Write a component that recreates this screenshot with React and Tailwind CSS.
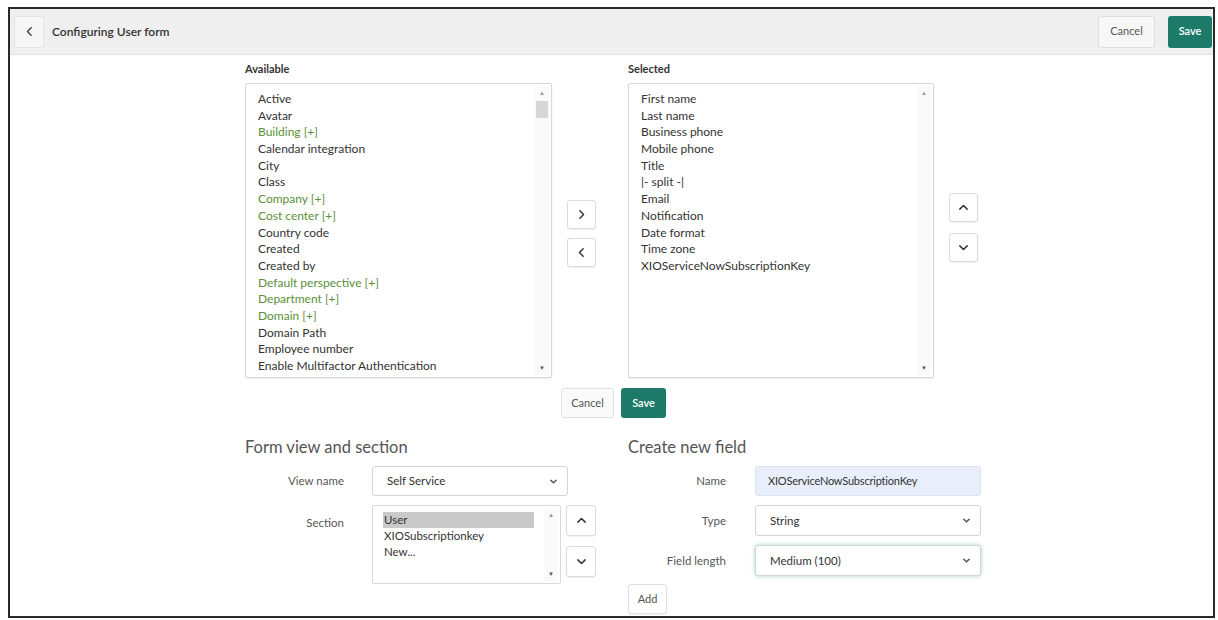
import React from "react";

const Chevron = ({ dir = "right", className = "" }) => {
  const d = {
    right: "M6 3.5 L10.5 8 L6 12.5",
    left: "M10 3.5 L5.5 8 L10 12.5",
    up: "M3.5 10 L8 5.5 L12.5 10",
    down: "M3.5 6 L8 10.5 L12.5 6",
  }[dir];
  return (
    <svg viewBox="0 0 16 16" className={className} fill="none" stroke="currentColor" strokeWidth="1.8" strokeLinecap="round" strokeLinejoin="round">
      <path d={d} />
    </svg>
  );
};

const SmallCaret = () => (
  <svg viewBox="0 0 10 10" className="w-[9px] h-[9px] text-[#555]" fill="none" stroke="currentColor" strokeWidth="1.6" strokeLinecap="round" strokeLinejoin="round">
    <path d="M2 3.5 L5 6.5 L8 3.5" />
  </svg>
);

const IconBtn = ({ dir, className = "" }) => (
  <div className={"w-[29px] h-[29px] flex items-center justify-center bg-white border border-[#dcdcdc] rounded-[3px] shadow-[0_1px_1px_rgba(0,0,0,0.06)] text-[#333] " + className}>
    <Chevron dir={dir} className="w-[13px] h-[13px]" />
  </div>
);

const Scrollbar = ({ thumb }) => (
  <div className="absolute right-[2px] top-[2px] bottom-[2px] w-[14px] bg-[#fafafa] flex flex-col items-center">
    <div className="h-[14px] flex items-center justify-center text-[6px] text-[#999] leading-none">▲</div>
    {thumb && <div className="w-[12px] h-[17px] bg-[#d6d6d6] mt-[1px]" />}
    <div className="flex-1" />
    <div className="h-[14px] flex items-center justify-center text-[6px] text-[#555] leading-none">▼</div>
  </div>
);

const available = [
  ["Active", false],
  ["Avatar", false],
  ["Building [+]", true],
  ["Calendar integration", false],
  ["City", false],
  ["Class", false],
  ["Company [+]", true],
  ["Cost center [+]", true],
  ["Country code", false],
  ["Created", false],
  ["Created by", false],
  ["Default perspective [+]", true],
  ["Department [+]", true],
  ["Domain [+]", true],
  ["Domain Path", false],
  ["Employee number", false],
  ["Enable Multifactor Authentication", false],
];

const selected = [
  "First name",
  "Last name",
  "Business phone",
  "Mobile phone",
  "Title",
  "|- split -|",
  "Email",
  "Notification",
  "Date format",
  "Time zone",
  "XIOServiceNowSubscriptionKey",
];

const Select = ({ value, className = "" }) => (
  <div className={"h-[30px] flex items-center justify-between pl-[14px] pr-[9px] bg-white border border-[#d4d4d4] rounded-[3px] text-[11.5px] text-[#333] " + className}>
    <span>{value}</span>
    <SmallCaret />
  </div>
);

export default function App() {
  return (
    <div className="w-[1218px] h-[620px] bg-white pt-[7px] pl-[8px]" style={{ fontFamily: "Lato, 'Open Sans', sans-serif" }}>
      <div className="w-[1207px] h-[611px] border-2 border-[#2a2a2a] flex flex-col overflow-hidden">
        {/* Header */}
        <div className="h-[46px] shrink-0 bg-[#efefef] border-b border-[#e2e2e2] flex items-center pl-[4px] pr-[1px]">
          <div className="w-[30px] h-[32px] flex items-center justify-center bg-[#f6f6f6] border border-[#e4e4e4] rounded-[2px] text-[#444]">
            <Chevron dir="left" className="w-[13px] h-[13px]" />
          </div>
          <div className="ml-[8px] text-[12px] font-semibold text-[#333]">Configuring User form</div>
          <div className="flex-1" />
          <div className="w-[57px] h-[32px] flex items-center justify-center bg-[#f7f7f7] border border-[#dedede] rounded-[3px] text-[11px] text-[#555]">Cancel</div>
          <div className="ml-[13px] w-[44px] h-[32px] flex items-center justify-center bg-[#1d7a69] rounded-[3px] text-[11px] font-semibold text-white">Save</div>
        </div>

        {/* Body */}
        <div className="pl-[235px] flex flex-col">
          <div className="flex">
            {/* Available */}
            <div className="w-[307px] flex flex-col">
              <div className="h-[28px] flex items-center text-[11px] font-bold text-[#333]">Available</div>
              <div className="relative h-[295px] bg-white border border-[#d8d8d8] rounded-[2px] shadow-[0_1px_2px_rgba(0,0,0,0.08)] pl-[12px] pt-[7px]">
                {available.map(([t, g]) => (
                  <div key={t} className={"h-[16.7px] leading-[16.7px] text-[12px] " + (g ? "text-[#5a8f3a]" : "text-[#333]")}>{t}</div>
                ))}
                <Scrollbar thumb />
              </div>
            </div>
            {/* Move buttons */}
            <div className="ml-[15px] pt-[145px] flex flex-col gap-[9px]">
              <IconBtn dir="right" />
              <IconBtn dir="left" />
            </div>
            {/* Selected */}
            <div className="ml-[32px] w-[306px] flex flex-col">
              <div className="h-[28px] flex items-center text-[11px] font-bold text-[#333]">Selected</div>
              <div className="relative h-[295px] bg-white border border-[#d8d8d8] rounded-[2px] shadow-[0_1px_2px_rgba(0,0,0,0.08)] pl-[12px] pt-[7px]">
                {selected.map((t) => (
                  <div key={t} className="h-[16.7px] leading-[16.7px] text-[12px] text-[#333]">{t}</div>
                ))}
                <Scrollbar />
              </div>
            </div>
            {/* Order buttons */}
            <div className="ml-[15px] pt-[138px] flex flex-col gap-[11px]">
              <IconBtn dir="up" />
              <IconBtn dir="down" />
            </div>
          </div>

          {/* Cancel / Save */}
          <div className="mt-[10px] pl-[316px] flex gap-[7px]">
            <div className="w-[53px] h-[30px] flex items-center justify-center bg-[#fafafa] border border-[#e0e0e0] rounded-[3px] text-[11px] text-[#555]">Cancel</div>
            <div className="w-[45px] h-[30px] flex items-center justify-center bg-[#1d7a69] rounded-[3px] text-[11px] font-semibold text-white">Save</div>
          </div>

          {/* Bottom sections */}
          <div className="mt-[14px] flex">
            {/* Form view and section */}
            <div className="w-[383px] flex flex-col">
              <div className="h-[30px] flex items-center text-[16.5px] text-[#555]">Form view and section</div>
              <div className="mt-[4px] flex items-center">
                <div className="w-[99px] text-right text-[11.5px] text-[#555]">View name</div>
                <Select value="Self Service" className="ml-[28px] w-[196px]" />
              </div>
              <div className="mt-[9px] flex items-start">
                <div className="w-[99px] text-right text-[11.5px] text-[#555] pt-[9px]">Section</div>
                <div className="ml-[28px] relative w-[189px] h-[79px] bg-white border border-[#d8d8d8] rounded-[2px] pt-[6px] pl-[10px] pr-[26px]">
                  <div className="h-[16px] leading-[16px] bg-[#c9c9c9] pl-[1px] text-[11.5px] text-[#333]">User</div>
                  <div className="h-[16px] leading-[16px] pl-[1px] text-[11.5px] text-[#333]">XIOSubscriptionkey</div>
                  <div className="h-[16px] leading-[16px] pl-[1px] text-[11.5px] text-[#333]">New...</div>
                  <Scrollbar />
                </div>
                <div className="ml-[5px] flex flex-col gap-[10px]">
                  <IconBtn dir="up" className="w-[30px] h-[31px]" />
                  <IconBtn dir="down" className="w-[30px] h-[31px]" />
                </div>
              </div>
            </div>

            {/* Create new field */}
            <div className="flex flex-col">
              <div className="h-[30px] flex items-center text-[16.5px] text-[#555]">Create new field</div>
              <div className="mt-[4px] flex items-center">
                <div className="w-[98px] text-right text-[11.5px] text-[#555]">Name</div>
                <div className="ml-[29px] w-[226px] h-[30px] flex items-center pl-[12px] bg-[#e8effb] border border-[#dde3ee] rounded-[3px] text-[11px] text-[#333] tracking-[-0.2px]">XIOServiceNowSubscriptionKey</div>
              </div>
              <div className="mt-[9px] flex items-center">
                <div className="w-[98px] text-right text-[11.5px] text-[#555]">Type</div>
                <Select value="String" className="ml-[29px] w-[226px] h-[31px]" />
              </div>
              <div className="mt-[9px] flex items-center">
                <div className="w-[98px] text-right text-[11.5px] text-[#555]">Field length</div>
                <Select value="Medium (100)" className="ml-[29px] w-[226px] h-[31px] border-[#5e9f8f] shadow-[0_0_4px_rgba(60,160,130,0.45)]" />
              </div>
              <div className="mt-[8px] w-[39px] h-[30px] flex items-center justify-center bg-white border border-[#e0e0e0] rounded-[3px] shadow-[0_1px_1px_rgba(0,0,0,0.06)] text-[11px] text-[#555]">Add</div>
            </div>
          </div>
        </div>
      </div>
    </div>
  );
}
